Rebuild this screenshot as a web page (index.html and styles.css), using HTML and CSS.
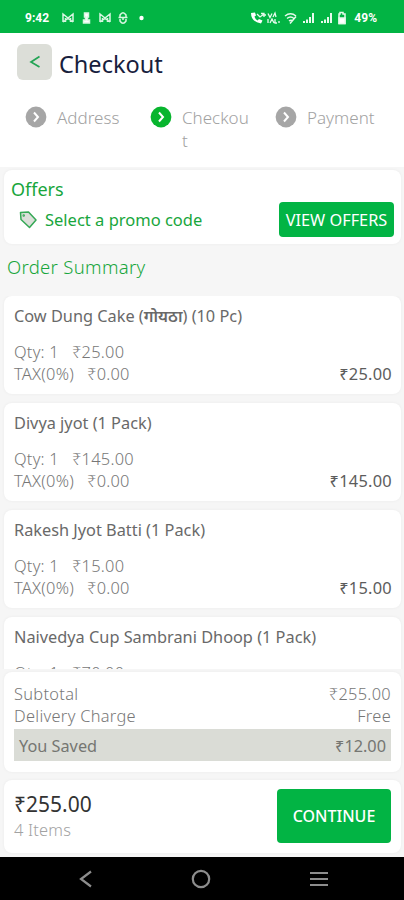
FILE: index.html
```html
<!DOCTYPE html>
<html lang="en">
<head>
<meta charset="utf-8">
<title>Checkout</title>
<link rel="stylesheet" href="styles.css">
</head>
<body>
<div class="app">
  <div class="status">
    <span class="clock">9:42</span>
    <svg class="status-left" width="90" height="16" viewBox="0 0 90 16" fill="none" stroke="#d9f6e2" stroke-width="1.5">
      <path d="M3 12V4l5 4 5-4v8M3 12l5-3.500 5 3.500M5.500 8v4M10.500 8v4"/>
      <path d="M24.500 3h4v4h-1v3h2v3h-6v-3h2V7h-1z" fill="#fff"/>
      <path d="M40 12V4l5 4 5-4v8M40 12l5-3.500 5 3.500M42.500 8v4M47.500 8v4"/>
      <path d="M60 7V5q3-4.500 6 0v2M58.500 7.500h9M60 9v2q3 4.500 6 0V9M63 7v3"/>
      <circle cx="81.500" cy="8" r="2.200" fill="#fff" stroke="none"/>
    </svg>
    <svg class="status-right" width="100" height="16" viewBox="0 0 100 16" fill="none" stroke="#e6faec" stroke-width="1.300">
      <path d="M1 3q0 9 10 10.500l1.500-3-3.500-1.500-1.500 1.500q-2.500-1.500-3-4l1.500-1-1-3z" fill="#fff" stroke="none"/>
      <path d="M7 4l3 3 4-3M11 3.500h3V7M14 5h2"/>
      <path d="M18 3.500l2 4 2-4M23 7l2-4 1 4M18 9v4M20 13l2-4 2 4M25 9v4h2M29 11v2"/>
      <path d="M35 6q5.500-4.500 11 0M37 8.500q3.500-3 7 0M39 11q2-1.500 4 0M46 6.500l-6 7" stroke-width="1.500"/>
      <path d="M54 13v-2M57 13V9.500M60 13V7M63 13V3M72 13v-2M75 13V9.500M78 13V7M81 13V3" stroke-width="2"/>
      <path d="M89 4h1V2.500h3V4h2v9.500h-6z" stroke-width="1.500"/>
      <path d="M89 8h6v5.500h-6z" fill="#fff"/>
    </svg>
    <span class="battery">49%</span>
  </div>

  <header class="header">
    <div class="title-row">
      <div class="back"><svg width="12" height="14" viewBox="0 0 12 14" fill="none" stroke="#23a455" stroke-width="1.700"><path d="M10.500 1.500L2 7l8.500 5"/></svg></div>
      <h1>Checkout</h1>
    </div>
    <div class="steps">
      <div class="step"><svg width="22" height="22" viewBox="0 0 22 22"><circle cx="11" cy="11" r="10.400" fill="#a6a6a6"/><path d="M9 6.500l4 4.500-4 4.500" fill="none" stroke="#fff" stroke-width="2"/></svg><span>Address</span></div>
      <div class="step"><svg width="22" height="22" viewBox="0 0 22 22"><circle cx="11" cy="11" r="10.400" fill="#08b52e"/><path d="M9 6.500l4 4.500-4 4.500" fill="none" stroke="#fff" stroke-width="2"/></svg><span>Checkout</span></div>
      <div class="step"><svg width="22" height="22" viewBox="0 0 22 22"><circle cx="11" cy="11" r="10.400" fill="#a6a6a6"/><path d="M9 6.500l4 4.500-4 4.500" fill="none" stroke="#fff" stroke-width="2"/></svg><span>Payment</span></div>
    </div>
  </header>

  <section class="card offers">
    <div class="offers-text">
      <h2>Offers</h2>
      <div class="promo">
        <svg width="18" height="18" viewBox="0 0 18 18" fill="#dcdfda" stroke="#35a855" stroke-width="1.500" stroke-linejoin="round"><path d="M1.500 1.500l8-.5 7.500 8-6.500 7.500-8.500-8z"/><circle cx="4.700" cy="4.500" r=".5"/></svg>
        <span>Select a promo code</span>
      </div>
    </div>
    <button class="btn view">VIEW OFFERS</button>
  </section>

  <h2 class="summary-title">Order Summary</h2>

  <main class="items">
    <article class="card item">
      <h3>Cow Dung Cake (<span class="hindi">गोयठा</span>) (10 Pc)</h3>
      <p><span>Qty: 1</span><span>₹25.00</span></p>
      <p><span>TAX(0%)</span><span>₹0.00</span><b>₹25.00</b></p>
    </article>
    <article class="card item">
      <h3>Divya jyot (1 Pack)</h3>
      <p><span>Qty: 1</span><span>₹145.00</span></p>
      <p><span>TAX(0%)</span><span>₹0.00</span><b>₹145.00</b></p>
    </article>
    <article class="card item">
      <h3>Rakesh Jyot Batti (1 Pack)</h3>
      <p><span>Qty: 1</span><span>₹15.00</span></p>
      <p><span>TAX(0%)</span><span>₹0.00</span><b>₹15.00</b></p>
    </article>
    <article class="card item">
      <h3>Naivedya Cup Sambrani Dhoop (1 Pack)</h3>
      <p><span>Qty: 1</span><span>₹70.00</span></p>
    </article>
  </main>

  <section class="card totals">
    <div class="line"><span>Subtotal</span><span>₹255.00</span></div>
    <div class="line"><span>Delivery Charge</span><span>Free</span></div>
    <div class="line saved"><span>You Saved</span><span>₹12.00</span></div>
  </section>

  <section class="card pay">
    <div><div class="amount">₹255.00</div><div class="count">4 Items</div></div>
    <button class="btn continue">CONTINUE</button>
  </section>

  <nav class="nav">
    <svg width="14" height="18" viewBox="0 0 14 18"><path d="M12 1.500L2 9l10 7.500"/></svg>
    <svg width="20" height="20" viewBox="0 0 20 20"><circle cx="10" cy="10" r="8.200"/></svg>
    <svg width="20" height="16" viewBox="0 0 20 16"><path d="M1 2h18M1 8h18M1 14h18"/></svg>
  </nav>
</div>
</body>
</html>
```
FILE: styles.css
```css
* { box-sizing: border-box; margin: 0; }
body { font-family: "Noto Sans", sans-serif; background: #f6f6f6; }
.app { width: 404px; height: 900px; display: flex; flex-direction: column; overflow: hidden; }
svg { flex: none; display: block; }

.status { height: 33px; flex: none; background: #02b444; color: #fff; display: flex; align-items: center; padding: 2px 27px 0 25px; font: 700 12px/16px Roboto, sans-serif; }
.clock { width: 35px; }
.status-right { margin-left: 100px; }
.battery { margin-left: auto; font-size: 12px; }

.header { height: 134px; flex: none; background: #fff; padding: 11px 17px 0; }
.title-row { display: flex; align-items: center; gap: 7px; height: 36px; }
.back { width: 35px; height: 36px; border-radius: 6px; background: #dcded8; display: flex; align-items: center; justify-content: center; }
h1 { font-size: 23.500px; font-weight: 400; line-height: 32px; color: #17203d; padding-top: 4px; }
.steps { display: flex; padding: 26px 0 0 8px; }
.step { width: 125px; flex: none; display: flex; gap: 10px; font-size: 17px; line-height: 23px; color: #a2a2a2; font-weight: 300; }
.step span { width: 68px; word-break: break-all; }

.card { background: #fff; margin: 0 3px 0 4px; border-radius: 8px; flex: none; box-shadow: 0 0 3px #eaeaea; }
.offers { margin-top: 3px; height: 74px; display: flex; justify-content: space-between; align-items: flex-start; padding: 7px 7px 0; }
h2 { font-size: 18px; font-weight: 400; line-height: 24px; color: #18a63c; }
.promo { display: flex; align-items: center; gap: 8px; padding: 7px 0 0 8px; font-size: 16.500px; line-height: 24px; color: #18a63c; }
.btn { border: 0; padding: 0; background: #02b444; color: #fff; border-radius: 4px; font-family: inherit; white-space: nowrap; }
.view { width: 115px; height: 35px; margin-top: 25px; font-size: 16.300px; }
.summary-title { font-size: 18.500px; font-weight: 300; letter-spacing: .3px; height: 52px; flex: none; padding: 11px 0 0 7px; }

.items { height: 373px; flex: none; overflow: hidden; display: flex; flex-direction: column; gap: 9px; }
.item { height: 98px; padding: 8px 9px 0 10px; }
h3 { font-size: 16.320px; font-weight: 400; line-height: 24px; color: #696969; margin-bottom: 13px; white-space: nowrap; }
.hindi { font-weight: 600; }
.item p { display: flex; gap: 13px; font-size: 16.400px; letter-spacing: .25px; line-height: 22px; color: #777; font-weight: 300; }
.item b { margin-left: auto; font-weight: 400; color: #5c5c5c; }

.totals { margin-top: 3px; height: 100px; padding: 11px 10px 0; }
.line { display: flex; justify-content: space-between; font-size: 16.400px; letter-spacing: .3px; line-height: 22px; color: #777; font-weight: 300; }
.saved { background: #dadcd6; height: 32px; margin-top: 2px; padding: 1px 5px 0; font-size: 16.300px; letter-spacing: 0; line-height: 32px; color: #757672; font-weight: 400; }
.pay { margin-top: 8px; height: 73px; display: flex; justify-content: space-between; padding: 9px 10px 0; }
.amount { font-size: 21px; line-height: 30px; color: #333; }
.count { font-size: 16.400px; line-height: 22px; color: #a2a2a2; font-weight: 300; letter-spacing: .2px; }
.continue { width: 114px; height: 54px; font-size: 16px; font-weight: 500; }
.nav { background: #000; height: 43px; margin-top: auto; flex: none; display: flex; align-items: center; justify-content: space-between; padding: 1px 75px 0 79px; }
.nav svg { fill: none; stroke: #8d8d8d; stroke-width: 2.200; }
```
